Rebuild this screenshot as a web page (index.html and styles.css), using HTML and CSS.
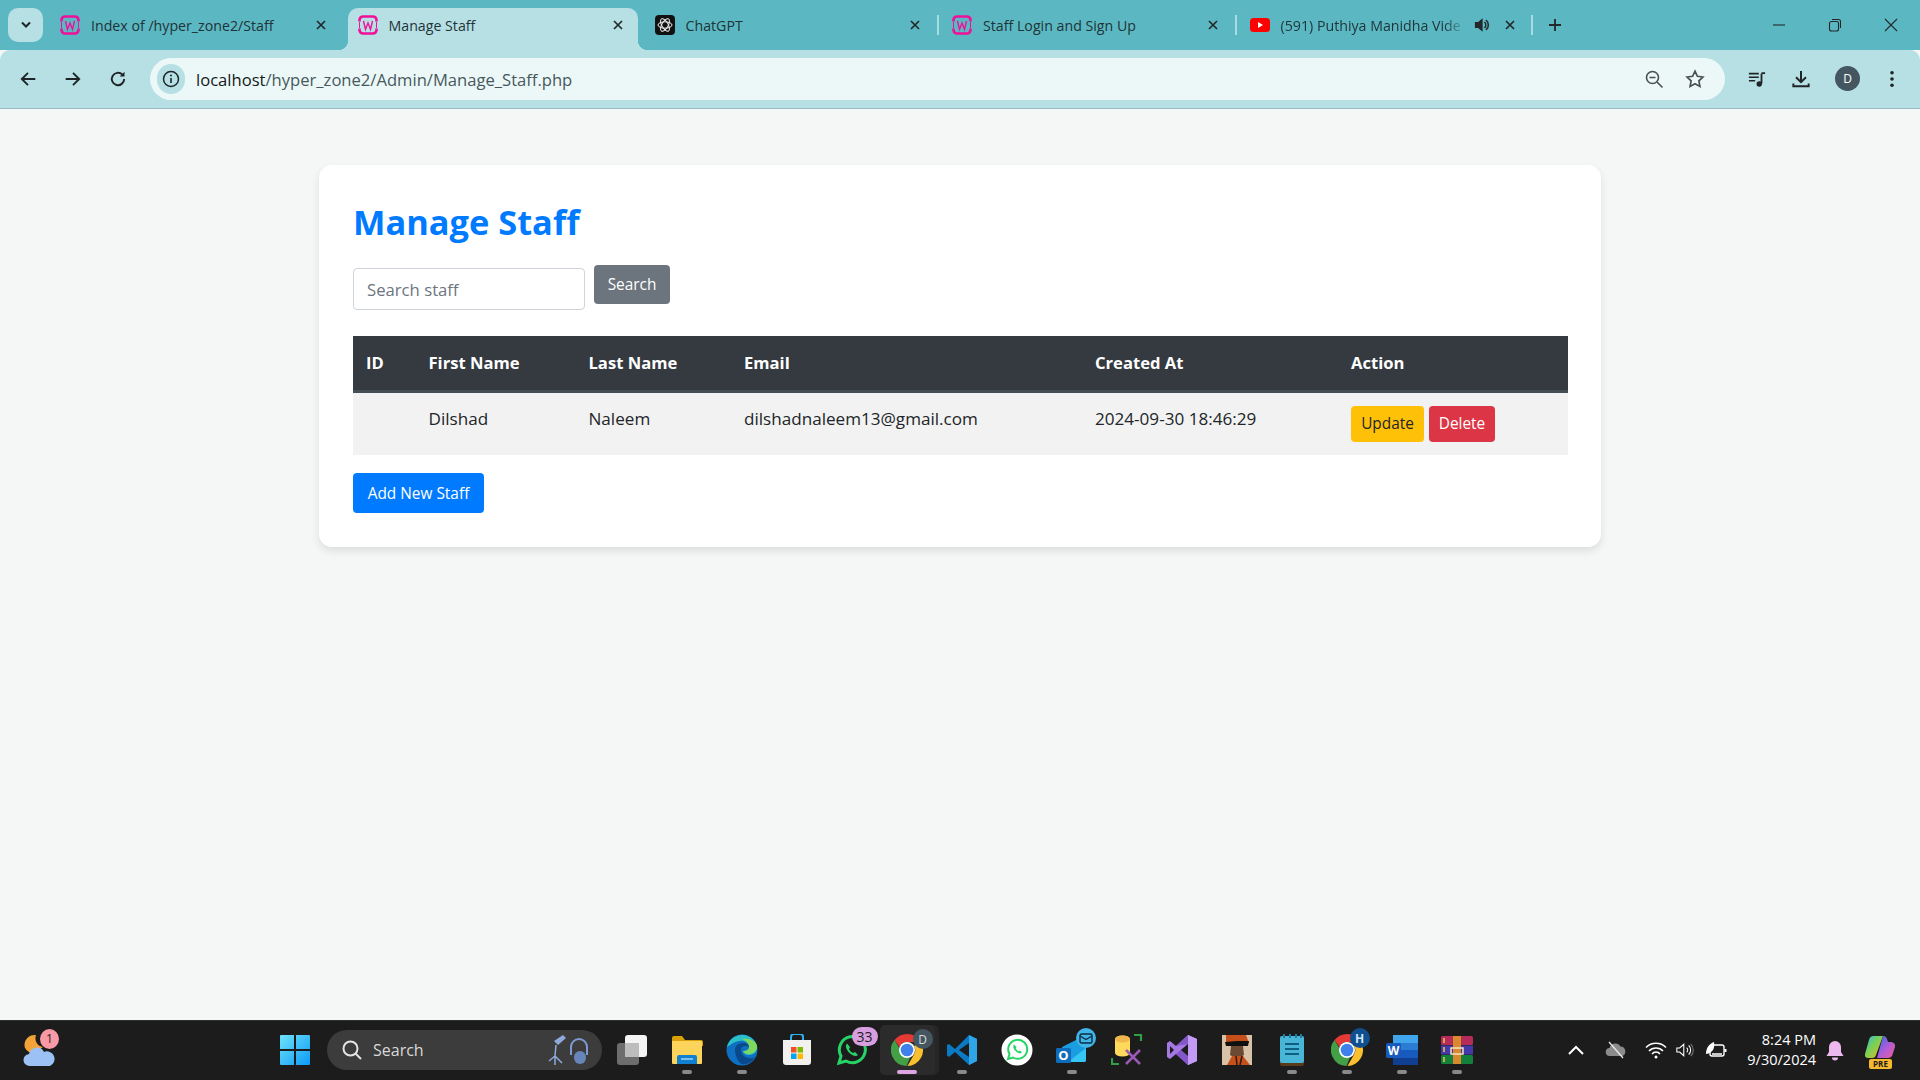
FILE: index.html
```html
<!DOCTYPE html>
<html lang="en">
<head>
	<title>Manage Staff</title>
	<meta charset="utf-8">
	<link rel="stylesheet" href="styles.css">
</head>
<body>
	<svg class="defs" width="0" height="0">
		<symbol id="wamp" viewBox="0 0 20 20">
			<path d="M1.500 6.500V5A3.500 3.500 0 0 1 5 1.500h10A3.500 3.500 0 0 1 18.500 5v1.500M1.500 13.500V15A3.500 3.500 0 0 0 5 18.500h10a3.500 3.500 0 0 0 3.500-3.500v-1.500" fill="none" stroke="#f0109a" stroke-width="2.600"/>
			<path d="M1.500 7v6M18.500 7v6" stroke="#f0109a" stroke-width="1"/>
			<path d="M5.500 6 7.500 14.500 10 8 12.500 14.500 14.500 6" fill="none" stroke="#f0109a" stroke-width="1.400"/>
		</symbol>
		<symbol id="close" viewBox="0 0 12 12">
			<path d="M2 2l8 8M10 2l-8 8" fill="none" stroke="#23282b" stroke-width="1.700"/>
		</symbol>
		<symbol id="chrome" viewBox="0 0 32 32">
			<path d="M16 0A16 16 0 0 1 29.900 8H16a8 8 0 0 0-7.500 5L3.500 6A16 16 0 0 1 16 0z" fill="#e53935"/>
			<path d="M29.900 8A16 16 0 0 1 16.500 32L23 20.500A8 8 0 0 0 23 12z" fill="#fbc02d"/>
			<path d="M3.500 6 10 17a7 7 0 0 0 9 6.500L15.500 32A16 16 0 0 1 3.500 6z" fill="#43a047"/>
			<circle cx="16" cy="16" r="8" fill="#fff"/>
			<circle cx="16" cy="16" r="6.300" fill="#3f80ea"/>
		</symbol>
		<symbol id="whatsapp" viewBox="0 0 32 32">
			<path d="M3 29l2-7A13 13 0 1 1 10 27z" fill="none" stroke="#25d366" stroke-width="3"/>
			<path d="M11 9.500c-2 2-1 6 2 9s7 4.500 9 2.500l-3-3-2 1c-2-1-3-2-4-4l1-2z" fill="#25d366"/>
		</symbol>
	</svg>

	<div class="tabstrip">
		<button class="tab-list">
			<svg width="12" height="8" viewBox="0 0 12 8"><path d="M2 1.500 6 5.500 10 1.500" fill="none" stroke="#1f2426" stroke-width="2"/></svg>
		</button>
		<div class="tab">
			<svg class="favicon"><use href="#wamp"/></svg>
			<span class="tab-title">Index of /hyper_zone2/Staff</span>
			<svg class="tab-close"><use href="#close"/></svg>
		</div>
		<div class="tab tab-active">
			<svg class="favicon"><use href="#wamp"/></svg>
			<span class="tab-title">Manage Staff</span>
			<svg class="tab-close"><use href="#close"/></svg>
		</div>
		<div class="tab">
			<svg class="favicon" viewBox="0 0 20 20">
				<rect width="20" height="20" rx="4" fill="#111"/>
				<g fill="none" stroke="#eee" stroke-width="1">
					<ellipse cx="10" cy="10" rx="7" ry="3.200" transform="rotate(60 10 10)"/>
					<ellipse cx="10" cy="10" rx="7" ry="3.200" transform="rotate(-60 10 10)"/>
					<ellipse cx="10" cy="10" rx="7" ry="3.200"/>
				</g>
			</svg>
			<span class="tab-title">ChatGPT</span>
			<svg class="tab-close"><use href="#close"/></svg>
		</div>
		<div class="tab tab-sep">
			<svg class="favicon"><use href="#wamp"/></svg>
			<span class="tab-title">Staff Login and Sign Up</span>
			<svg class="tab-close"><use href="#close"/></svg>
		</div>
		<div class="tab tab-sep tab-last">
			<svg class="favicon" viewBox="0 0 20 20">
				<rect y="3" width="20" height="14" rx="3.500" fill="#f00"/>
				<path d="M8 7l5 3-5 3z" fill="#fff"/>
			</svg>
			<span class="tab-title tab-fade">(591) Puthiya Manidha Vide</span>
			<svg class="tab-audio" viewBox="0 0 16 16">
				<path d="M1.500 5.500h3L8 2.500v11l-3.500-3h-3z" fill="#23282b" stroke="#23282b" stroke-width="1.200"/>
				<path d="M10.500 5a4 4 0 0 1 0 6M12 3a6.500 6.500 0 0 1 0 10" fill="none" stroke="#23282b" stroke-width="1.500"/>
			</svg>
			<svg class="tab-close"><use href="#close"/></svg>
		</div>
		<svg class="new-tab" viewBox="0 0 14 14"><path d="M7 1v12M1 7h12" stroke="#23282b" stroke-width="1.800"/></svg>
		<div class="window-controls">
			<svg viewBox="0 0 14 14"><path d="M1 7h12" stroke="#23282b" stroke-width="1.100"/></svg>
			<svg viewBox="0 0 14 14"><rect x="1.500" y="3.500" width="9" height="9.500" rx="2" fill="none" stroke="#23282b" stroke-width="1.100"/><path d="M4 1.500h6.500a2 2 0 0 1 2 2V10" fill="none" stroke="#23282b" stroke-width="1.100"/></svg>
			<svg viewBox="0 0 14 14"><path d="M1 1l12 12M13 1 1 13" stroke="#23282b" stroke-width="1.100"/></svg>
		</div>
	</div>

	<div class="toolbar">
		<svg class="tool-icon" viewBox="0 0 16 16"><path d="M14.500 8h-12M8 2.500 2.500 8 8 13.500" fill="none" stroke="#1f2426" stroke-width="1.700"/></svg>
		<svg class="tool-icon" viewBox="0 0 16 16"><path d="M1.500 8h12M8 2.500 13.500 8 8 13.500" fill="none" stroke="#1f2426" stroke-width="1.700"/></svg>
		<svg class="tool-icon" viewBox="0 0 16 16"><path d="M13.500 8A5.500 5.500 0 1 1 11.800 4" fill="none" stroke="#1f2426" stroke-width="1.700"/><path d="M13.800 1.500v4.300H9.500z" fill="#1f2426"/></svg>
		<div class="omnibox">
			<span class="site-info">
				<svg width="18" height="18" viewBox="0 0 18 18"><circle cx="9" cy="9" r="7.500" fill="none" stroke="#1f2426" stroke-width="1.500"/><path d="M9 8v5" stroke="#1f2426" stroke-width="1.600"/><circle cx="9" cy="5.500" r="1" fill="#1f2426"/></svg>
			</span>
			<span class="url"><span class="url-host">localhost</span>/hyper_zone2/Admin/Manage_Staff.php</span>
			<svg class="omni-icon" viewBox="0 0 20 20"><circle cx="8.500" cy="8.500" r="6" fill="none" stroke="#4a5052" stroke-width="1.600"/><path d="M5.500 8.500h6M13 13l5.500 5.500" stroke="#4a5052" stroke-width="1.600"/></svg>
			<svg class="omni-icon" viewBox="0 0 20 20"><path d="M10 2.200l2.400 5.100 5.500.7-4 3.900 1 5.500-4.900-2.700-4.900 2.700 1-5.500-4-3.900 5.500-.7z" fill="none" stroke="#4a5052" stroke-width="1.700"/></svg>
		</div>
		<svg class="tool-icon tool-media" viewBox="0 0 20 20"><path d="M1 4h11M1 8h11M1 12h7" stroke="#1f2426" stroke-width="1.800"/><path d="M15 4v11" stroke="#1f2426" stroke-width="2"/><path d="M15 3.500h4" stroke="#1f2426" stroke-width="2"/><circle cx="12.500" cy="15.500" r="3" fill="#1f2426"/></svg>
		<svg class="tool-icon tool-download" viewBox="0 0 20 20"><path d="M10 1v12M4.500 8 10 13.500 15.500 8" fill="none" stroke="#1f2426" stroke-width="2.200"/><path d="M1.500 15v3h17v-3" fill="none" stroke="#1f2426" stroke-width="2.200"/></svg>
		<span class="avatar">D</span>
		<svg class="tool-icon tool-menu" viewBox="0 0 16 16"><circle cx="8" cy="2.500" r="1.600" fill="#1f2426"/><circle cx="8" cy="8" r="1.600" fill="#1f2426"/><circle cx="8" cy="13.500" r="1.600" fill="#1f2426"/></svg>
	</div>

	<main class="page">
		<section class="card">
			<h1>Manage Staff</h1>
			<form class="search-form">
				<input type="text" class="search-input" placeholder="Search staff">
				<button type="button" class="btn btn-secondary">Search</button>
			</form>
			<table class="staff-table">
				<thead>
					<tr>
						<th class="col-id">ID</th>
						<th class="col-first">First Name</th>
						<th class="col-last">Last Name</th>
						<th class="col-email">Email</th>
						<th class="col-created">Created At</th>
						<th class="col-action">Action</th>
					</tr>
				</thead>
				<tbody>
					<tr>
						<td></td>
						<td>Dilshad</td>
						<td>Naleem</td>
						<td>dilshadnaleem13@gmail.com</td>
						<td>2024-09-30 18:46:29</td>
						<td class="actions">
							<a class="btn btn-warning">Update</a>
							<a class="btn btn-danger">Delete</a>
						</td>
					</tr>
				</tbody>
			</table>
			<a class="btn btn-primary">Add New Staff</a>
		</section>
	</main>

	<footer class="taskbar">
		<div class="task-weather">
			<svg width="36" height="36" viewBox="0 0 36 36">
				<path d="M14 3a10 10 0 0 0-11 13 10 10 0 0 0 9 5l9-6a9 9 0 0 1-7-12z" fill="#f2a43a"/>
				<path d="M8 34a6 6 0 0 1-1-12 8 8 0 0 1 15-2 7 7 0 0 1 6 14z" fill="#9cc1f5"/>
			</svg>
			<span class="weather-badge">1</span>
		</div>
		<div class="task-item">
			<svg width="30" height="30" viewBox="0 0 30 30">
				<defs><linearGradient id="win" x1="0" y1="0" x2="1" y2="1"><stop offset="0" stop-color="#6fe3fb"/><stop offset="1" stop-color="#0b9af5"/></linearGradient></defs>
				<path d="M0 1a1 1 0 0 1 1-1h13v14H0zM16 0h13a1 1 0 0 1 1 1v13H16zM0 16h14v14H1a1 1 0 0 1-1-1zM16 16h14v13a1 1 0 0 1-1 1H16z" fill="url(#win)"/>
			</svg>
		</div>
		<div class="task-search">
			<svg width="22" height="22" viewBox="0 0 22 22"><circle cx="9.500" cy="9.500" r="7" fill="none" stroke="#e4e4e4" stroke-width="2"/><path d="M14.500 14.500 20 20" stroke="#e4e4e4" stroke-width="2"/></svg>
			<span class="task-search-text">Search</span>
			<svg class="search-art" width="46" height="34" viewBox="0 0 46 34">
				<path d="M10 8l9-6 3 3-8 7z" fill="#8fa9dc"/>
				<path d="M12 12l-1 11M11 23l-6 5M11 23l7 7M11 23v9" stroke="#8fa9dc" stroke-width="1.500" fill="none"/>
				<path d="M27 22v-8a8 8 0 0 1 16 0v8" fill="none" stroke="#7d9ad2" stroke-width="2"/>
				<rect x="30" y="18" width="12" height="13" rx="6" fill="#6685b8"/>
			</svg>
		</div>
		<div class="task-item">
			<svg width="32" height="32" viewBox="0 0 32 32">
				<rect x="1" y="9" width="22" height="22" rx="3" fill="#6d6d6d"/>
				<rect x="9" y="1" width="22" height="22" rx="3" fill="#f4f4f4"/>
				<rect x="9" y="9" width="14" height="14" fill="#bdbdbd"/>
			</svg>
		</div>
		<div class="task-item task-open">
			<svg width="32" height="30" viewBox="0 0 32 30">
				<path d="M1 3a2 2 0 0 1 2-2h8l3 4h16a2 2 0 0 1 2 2v4H1z" fill="#d9a008"/>
				<path d="M1 6h30v22a1 1 0 0 1-1 1H2a1 1 0 0 1-1-1z" fill="#fcd35b"/>
				<path d="M6 22a2 2 0 0 1 2-2h16a2 2 0 0 1 2 2v7H6z" fill="#1280d0"/>
				<path d="M10 24h12" stroke="#9fd6f7" stroke-width="1.500"/>
			</svg>
		</div>
		<div class="task-item task-open">
			<svg width="32" height="32" viewBox="0 0 32 32">
				<circle cx="16" cy="16" r="15.500" fill="#0f6fc0"/>
				<path d="M1 13A15.500 15.500 0 0 1 31 12c1 5-3 9-8 9-4 0-6-2-6-4 3 0 6-1 6-4 0-5-5-7-10-6-6 1-10 5-12 6z" fill="#2cc1c9"/>
				<path d="M31 12c.6 4-3 8-8 8-3 0-5-1-6-3 3 0 6-1 6-4 0-4-4-7-7-8 8-1 14 2 15 7z" fill="#7fd75b"/>
				<path d="M9 16c0-4 3-7 8-7 4 0 6 2 6 4-3-2-9-1-8 4 1 6 8 9 14 6-3 5-8 8-13 7-4-1-7-9-7-14z" fill="#0a4a8c"/>
			</svg>
		</div>
		<div class="task-item">
			<svg width="30" height="32" viewBox="0 0 30 32">
				<path d="M9 6V3a3 3 0 0 1 3-3h6a3 3 0 0 1 3 3v3" fill="none" stroke="#2eb0ea" stroke-width="2"/>
				<path d="M1 6h28v22a3 3 0 0 1-3 3H4a3 3 0 0 1-3-3z" fill="#f3f1ee"/>
				<rect x="9" y="13" width="5.500" height="5.500" fill="#f25022"/>
				<rect x="15.500" y="13" width="5.500" height="5.500" fill="#7fba00"/>
				<rect x="9" y="19.500" width="5.500" height="5.500" fill="#00a4ef"/>
				<rect x="15.500" y="19.500" width="5.500" height="5.500" fill="#ffb900"/>
			</svg>
		</div>
		<div class="task-item">
			<svg width="32" height="32"><use href="#whatsapp"/></svg>
			<span class="badge badge-count">33</span>
		</div>
		<div class="task-item task-active">
			<svg width="32" height="32"><use href="#chrome"/></svg>
			<span class="badge badge-profile">D</span>
		</div>
		<div class="task-item task-open">
			<svg width="32" height="32" viewBox="0 0 32 32">
				<path d="M23 1l8 4v22l-8 4-14-13-6 5-2-1.500V11L3 10l6 5z" fill="#0a7ac4"/>
				<path d="M23 1l8 4v22l-8 4z" fill="#2fa4e7"/>
				<path d="M23 9 13 16l10 7z" fill="#1c1c1c"/>
			</svg>
		</div>
		<div class="task-item">
			<svg width="32" height="32" viewBox="0 0 32 32">
				<circle cx="16" cy="16" r="15.500" fill="#fff"/>
				<path d="M7 25l1.500-5a9.500 9.500 0 1 1 3.500 3.500z" fill="none" stroke="#25d366" stroke-width="2"/>
				<path d="M13 10.500c-1.500 1.500-.5 4.500 1.500 6.500s5 3 6.500 1.500l-2-2-1.500.7c-1.500-.7-2-1.500-2.800-2.900l.7-1.300z" fill="#25d366"/>
			</svg>
		</div>
		<div class="task-item task-open">
			<svg width="32" height="32" viewBox="0 0 32 32">
				<path d="M6 13 20 6h10v20a2 2 0 0 1-2 2H10a3 3 0 0 1-3-3z" fill="#1b9de2"/>
				<path d="M30 14v12a2 2 0 0 1-2 2H12z" fill="#35c6f4"/>
				<rect y="14" width="15" height="15" rx="1.500" fill="#0f6cbd"/>
				<text class="icon-letter" x="7.500" y="26" text-anchor="middle" font-size="13">O</text>
			</svg>
			<span class="badge badge-mail">
				<svg width="14" height="11" viewBox="0 0 14 11"><rect x="1" y="1" width="12" height="9" rx="1.500" fill="none" stroke="#0e2b44" stroke-width="1.400"/><path d="M1 3l6 3.500L13 3" fill="none" stroke="#0e2b44" stroke-width="1.400"/></svg>
			</span>
		</div>
		<div class="task-item">
			<svg width="32" height="32" viewBox="0 0 32 32">
				<path d="M1 24v6h7M23 1h7v6" fill="none" stroke="#2f9e44" stroke-width="2.200"/>
				<path d="M4 5a7.500 3.500 0 0 1 15 0v14a7.500 3.500 0 0 1-15 0z" fill="#ffd95a"/>
				<ellipse cx="11.500" cy="5" rx="7.500" ry="3.500" fill="#f1b64c"/>
				<path d="M15 16l14 14M29 16 15 30" stroke="#9b59b6" stroke-width="2.500"/>
			</svg>
		</div>
		<div class="task-item">
			<svg width="32" height="32" viewBox="0 0 32 32">
				<path d="M22 1 31 5v22l-9 4-12-11-6 5-3-2V9l3-2 6 5z" fill="#a678e4"/>
				<path d="M22 1 31 5v22l-9 4z" fill="#c39bf4"/>
				<path d="M22 1v30L10 20 22 10 10 12z" fill="#8457c9"/>
				<path d="M4 12v8l4-4z" fill="#1c1c1c"/>
				<path d="M22 10v12l-7-6z" fill="#1c1c1c"/>
			</svg>
		</div>
		<div class="task-item">
			<svg width="30" height="30" viewBox="0 0 30 30">
				<rect width="30" height="30" fill="#d8c3a8"/>
				<path d="M4 0h20l3 8H4z" fill="#c7501a"/>
				<path d="M3 7l12-1 12 0-1 5H4z" fill="#111"/>
				<path d="M9 11h12l1 9-7 4-7-4z" fill="#6b4a32"/>
				<path d="M5 30l5-9h11l7 9z" fill="#c7501a"/>
				<path d="M14 21l1 9M20 21l-2 9" stroke="#2a1a10" stroke-width="1.500"/>
			</svg>
		</div>
		<div class="task-item task-open">
			<svg width="24" height="32" viewBox="0 0 24 32">
				<rect y="2" width="24" height="30" rx="2" fill="#5b3a1a"/>
				<rect y="2" width="24" height="27" rx="2" fill="#49b6d8"/>
				<path d="M4 0v4M10 0v4M16 0v4M21 0v4" stroke="#1c7ea3" stroke-width="2"/>
				<path d="M5 10h14M5 15h14M5 20h14" stroke="#0f5f80" stroke-width="2"/>
			</svg>
		</div>
		<div class="task-item task-open">
			<svg width="32" height="32"><use href="#chrome"/></svg>
			<span class="badge badge-h">H</span>
		</div>
		<div class="task-item task-open">
			<svg width="32" height="30" viewBox="0 0 32 30">
				<rect x="7" width="25" height="30" rx="1.500" fill="#2b7cd3"/>
				<rect x="7" width="25" height="8" fill="#41a5ee"/>
				<rect x="7" y="15" width="25" height="8" fill="#185abd"/>
				<rect x="7" y="23" width="25" height="7" fill="#103f91"/>
				<rect y="8" width="15" height="15" rx="1.500" fill="#185abd"/>
				<text class="icon-letter" x="7.500" y="20" text-anchor="middle" font-size="12">W</text>
			</svg>
		</div>
		<div class="task-item task-open">
			<svg width="32" height="28" viewBox="0 0 32 28">
				<rect width="32" height="9" rx="1.500" fill="#b52b5a"/>
				<rect y="9.500" width="32" height="9" fill="#4339a8"/>
				<rect y="19" width="32" height="9" rx="1.500" fill="#13813a"/>
				<rect x="12" width="8" height="28" fill="#d98a2e"/>
				<rect x="10" y="12" width="12" height="6" fill="none" stroke="#f5e2c2" stroke-width="1.500"/>
				<path d="M3 2v5M3 11v5M3 21v5" stroke="#f2c14e" stroke-width="1.500"/>
			</svg>
		</div>
		<div class="tray">
			<div class="tray-icon tray-wide">
				<svg width="16" height="10" viewBox="0 0 16 10"><path d="M1 9l7-7 7 7" fill="none" stroke="#fff" stroke-width="2"/></svg>
			</div>
			<div class="tray-icon tray-wide">
				<svg width="22" height="18" viewBox="0 0 22 18"><path d="M5 15a4 4 0 0 1-.5-8 6 6 0 0 1 11-1.500A5 5 0 0 1 17.500 15z" fill="#8b8b8b"/><path d="M4 1l14 16" stroke="#e8e8e8" stroke-width="1.300"/></svg>
			</div>
			<div class="tray-icon tray-wide">
				<svg width="22" height="18" viewBox="0 0 22 18"><path d="M1 6.500a14 14 0 0 1 20 0M4 10a9.500 9.500 0 0 1 14 0M7 13a5 5 0 0 1 8 0" fill="none" stroke="#fff" stroke-width="1.500"/><circle cx="11" cy="16" r="1.500" fill="#fff"/></svg>
			</div>
			<div class="tray-icon tray-narrow">
				<svg width="22" height="18" viewBox="0 0 22 18"><path d="M1 6.500h3.500L9.500 2v14l-5-4.500H1z" fill="none" stroke="#fff" stroke-width="1.300"/><path d="M13 6a4 4 0 0 1 0 6M15.500 3.500a7.500 7.500 0 0 1 0 11" fill="none" stroke="#fff" stroke-width="1.300"/><path d="M18 1.500a10.500 10.500 0 0 1 0 15" fill="none" stroke="#777" stroke-width="1.300"/></svg>
			</div>
			<div class="tray-icon tray-battery">
				<svg width="22" height="18" viewBox="0 0 22 18"><rect x="5" y="4" width="14" height="11" rx="2" fill="none" stroke="#fff" stroke-width="1.400"/><path d="M19.500 8h2v3h-2z" fill="#fff"/><path d="M1 13C1 7 4 3 9 1c1 6-1 11-8 12z" fill="#fff"/><path d="M7 13h10" stroke="#fff" stroke-width="1.500"/></svg>
			</div>
			<div class="clock">
				<span>8:24 PM</span>
				<span>9/30/2024</span>
			</div>
			<div class="tray-icon tray-bell">
				<svg width="18" height="21" viewBox="0 0 18 21"><path d="M9 1a6 6 0 0 1 6 6v5l2.500 4h-17L3 12V7a6 6 0 0 1 6-6z" fill="#ecb8ee"/><path d="M6 17.500a3 3 0 0 0 6 0z" fill="#ecb8ee"/></svg>
			</div>
			<div class="tray-icon tray-copilot">
				<svg width="30" height="30" viewBox="0 0 30 30">
					<defs><linearGradient id="cop" x1="0" y1="0" x2="1" y2="1"><stop offset="0" stop-color="#35b8e8"/><stop offset=".45" stop-color="#7ad151"/><stop offset="1" stop-color="#f0b429"/></linearGradient><linearGradient id="cop2" x1="0" y1="0" x2="1" y2="1"><stop offset="0" stop-color="#2a6fe0"/><stop offset=".55" stop-color="#b45bd6"/><stop offset="1" stop-color="#ee5f93"/></linearGradient></defs>
					<path d="M8 1h10L11 20a4 4 0 0 1-4 3H3a3 3 0 0 1-3-4L4 5a5 5 0 0 1 4-4z" fill="url(#cop)"/>
					<path d="M18 1a4 4 0 0 1 4 3l1 3h3a4 4 0 0 1 4 5l-3 9a5 5 0 0 1-5 2H12z" fill="url(#cop2)"/>
				</svg>
				<span class="pre-badge">PRE</span>
			</div>
		</div>
	</footer>
</body>
</html>
```

FILE: styles.css
```css
* {
	box-sizing: border-box;
}

html, body {
	margin: 0;
	height: 100%;
	overflow: hidden;
}

body {
	display: flex;
	flex-direction: column;
	font-family: "Open Sans", "Noto Sans", sans-serif;
	background-color: #f4f7f6;
	color: #212529;
}

.defs {
	position: absolute;
}

/* browser tabs */
.tabstrip {
	display: flex;
	align-items: center;
	height: 50px;
	flex: none;
	background-color: #5bb8c2;
}

.tab-list {
	flex: none;
	display: flex;
	align-items: center;
	justify-content: center;
	width: 35px;
	height: 34px;
	margin: 0 5px 0 8px;
	border: none;
	border-radius: 10px;
	background-color: #b6e0e4;
}

.tab {
	position: relative;
	display: flex;
	align-items: center;
	flex: none;
	width: 297.500px;
	height: 50px;
	padding: 0 19px 0 12px;
}

.tab-active {
	width: 290px;
	height: 42px;
	margin: 8px 5px 0 2px;
	padding: 0 14px 8px 10px;
	border-radius: 10px 10px 0 0;
	background-color: #b6e0e4;
}

	.tab-active::before, .tab-active::after {
		content: "";
		position: absolute;
		bottom: 0;
		width: 10px;
		height: 10px;
	}

	.tab-active::before {
		left: -10px;
		background: radial-gradient(circle at 0 0, transparent 10px, #b6e0e4 10.500px);
	}

	.tab-active::after {
		right: -10px;
		background: radial-gradient(circle at 100% 0, transparent 10px, #b6e0e4 10.500px);
	}

.tab-sep::before {
	content: "";
	position: absolute;
	left: -3px;
	top: 15px;
	width: 2px;
	height: 20px;
	background-color: #a9dbe0;
}

.tab-last::after {
	content: "";
	position: absolute;
	right: 2px;
	top: 15px;
	width: 2px;
	height: 20px;
	background-color: #a9dbe0;
}

.favicon {
	flex: none;
	width: 20px;
	height: 20px;
	margin-right: 11px;
}

.tab-title {
	flex: 1;
	min-width: 0;
	white-space: nowrap;
	font-size: 14.200px;
	color: #1f3338;
}

.tab-fade {
	-webkit-mask-image: linear-gradient(to right, #000 88%, transparent);
}

.tab-audio {
	flex: none;
	width: 16px;
	height: 16px;
	margin: 0 14px 0 8px;
}

.tab-close {
	flex: none;
	width: 12px;
	height: 12px;
}

.new-tab {
	width: 14px;
	height: 14px;
	margin-left: 13px;
}

.window-controls {
	display: flex;
	align-items: center;
	gap: 42px;
	margin-left: auto;
	padding-right: 22px;
}

	.window-controls svg {
		width: 14px;
		height: 14px;
	}

/* address bar */
.toolbar {
	display: flex;
	align-items: center;
	flex: none;
	height: 59px;
	padding: 0 20px 1px 19px;
	border-bottom: 1px solid #94bcc2;
	border-radius: 10px 10px 0 0;
	background-color: #b6e0e4;
}

.tool-icon {
	flex: none;
	width: 18px;
	height: 18px;
	margin-right: 27px;
}

.toolbar > .tool-icon:nth-child(3) {
	margin-right: 23px;
}

.omnibox {
	display: flex;
	align-items: center;
	flex: none;
	width: 1575px;
	height: 42px;
	padding: 0 20px 0 7px;
	border-radius: 21px;
	background-color: #ecf8f8;
}

.site-info {
	display: flex;
	align-items: center;
	justify-content: center;
	flex: none;
	width: 28px;
	height: 30px;
	margin-right: 11px;
	border-radius: 15px;
	background-color: #b6e0e4;
}

.url {
	flex: 1;
	padding-top: 1px;
	font-size: 16.600px;
	color: #47585c;
}

.url-host {
	color: #14181a;
}

.omni-icon {
	flex: none;
	width: 20px;
	height: 20px;
	margin-left: 21px;
}

.tool-media {
	margin-left: 23px;
	margin-right: 26px;
}

.tool-download {
	margin-right: 25px;
}

.avatar {
	display: flex;
	align-items: center;
	justify-content: center;
	flex: none;
	width: 25px;
	height: 25px;
	margin-right: 23px;
	border-radius: 50%;
	font-size: 12px;
	color: #fff;
	background-color: #44565f;
}

.tool-menu {
	margin-right: 0;
}

/* page */
.page {
	flex: 1;
	min-height: 0;
	padding-top: 56px;
}

.card {
	width: 1282px;
	margin: 0 auto;
	padding: 34px 33px 34px 34px;
	border-radius: 13px;
	background-color: #fff;
	box-shadow: 0 4px 9px rgba(0,0,0,0.1);
}

h1 {
	margin: 0 0 20px;
	font-size: 34.400px;
	line-height: 46px;
	font-weight: 700;
	color: #007bff;
}

.search-form {
	display: flex;
	align-items: flex-start;
	gap: 9px;
	margin-bottom: 26px;
}

.search-input {
	width: 232px;
	height: 42px;
	margin-top: 3px;
	padding: 0 13px;
	border: 1px solid #ced4da;
	border-radius: 4px;
	font: inherit;
	font-size: 16.700px;
	outline: none;
}

	.search-input::placeholder {
		color: #6c757d;
	}

.btn {
	display: inline-flex;
	align-items: center;
	justify-content: center;
	border: none;
	border-radius: 4px;
	font-family: inherit;
	font-size: 15.400px;
	color: #fff;
}

.btn-secondary {
	width: 76px;
	height: 39px;
	background-color: #6c757d;
}

.btn-primary {
	width: 131px;
	height: 40px;
	margin-top: 18px;
	background-color: #007bff;
}

.btn-warning {
	width: 73px;
	height: 36px;
	color: #212529;
	background-color: #ffc107;
}

.btn-danger {
	width: 66px;
	height: 36px;
	background-color: #dc3545;
}

.staff-table {
	width: 100%;
	border-collapse: collapse;
	table-layout: fixed;
	font-size: 17.100px;
	line-height: 26.400px;
}

	.staff-table th {
		padding: 14px 13px 13.600px;
		border-bottom: 3px solid #454d55;
		text-align: left;
		font-size: 16.600px;
		font-weight: 700;
		color: #fff;
		background-color: #343a40;
	}

	.staff-table td {
		padding: 13px;
		vertical-align: top;
		background-color: #f2f2f2;
	}

.col-id { width: 62.500px; }
.col-first { width: 160px; }
.col-last { width: 155.500px; }
.col-email { width: 351px; }
.col-created { width: 256px; }

.actions {
	display: flex;
	gap: 5px;
}

/* windows taskbar */
.taskbar {
	display: flex;
	align-items: center;
	flex: none;
	height: 60px;
	padding-bottom: 1px;
	border-top: 1px solid #2e2e2e;
	background-color: #1c1c1c;
}

.task-weather {
	position: relative;
	flex: none;
	display: flex;
	align-items: center;
	width: 267px;
	padding-left: 22px;
}

.weather-badge {
	position: absolute;
	left: 40px;
	top: -3px;
	width: 19px;
	height: 20px;
	border-radius: 50%;
	text-align: center;
	font-size: 12px;
	line-height: 20px;
	color: #1c1c1c;
	background-color: #f79aa6;
}

.task-item {
	position: relative;
	flex: none;
	display: flex;
	align-items: center;
	justify-content: center;
	width: 55px;
	height: 50px;
}

.task-open::after {
	content: "";
	position: absolute;
	left: 50%;
	bottom: 1px;
	width: 10px;
	height: 4px;
	margin-left: -5px;
	border-radius: 2px;
	background-color: #8a8a8a;
}

.task-active {
	border-radius: 5px;
	background-color: #2b2b2b;
	box-shadow: 4px 0 0 #262626;
}

	.task-active::after {
		content: "";
		position: absolute;
		left: 50%;
		bottom: 1px;
		width: 20px;
		height: 4px;
		margin-left: -10px;
		border-radius: 2px;
		background-color: #dda5e2;
	}

.task-search {
	flex: none;
	display: flex;
	align-items: center;
	width: 275px;
	height: 40px;
	margin: 0 2.500px 0 5px;
	padding: 0 12px 0 14px;
	border-radius: 20px;
	background-color: #3c3c3c;
}

.task-search-text {
	flex: 1;
	margin-left: 10px;
	font-size: 16px;
	color: #d8d8d8;
}

.badge {
	position: absolute;
	display: flex;
	align-items: center;
	justify-content: center;
	border-radius: 50%;
}

.badge-count {
	top: 2px;
	left: 27px;
	width: 26px;
	height: 19px;
	border-radius: 10px;
	font-size: 14px;
	color: #1c1c1c;
	background-color: #d79ee0;
}

.badge-profile {
	top: 4px;
	left: 33px;
	width: 20px;
	height: 20px;
	font-size: 12px;
	color: #d5dde2;
	background-color: #44565f;
}

.badge-mail {
	top: 3px;
	left: 31px;
	width: 20px;
	height: 20px;
	background-color: #3fb5e8;
}

.badge-h {
	top: 3px;
	left: 30px;
	width: 20px;
	height: 20px;
	font-size: 12px;
	font-weight: 700;
	color: #cfe6f7;
	background-color: #0f4f8f;
}

.icon-letter {
	font-family: "Open Sans", sans-serif;
	font-weight: 700;
	fill: #fff;
}

.tray {
	display: flex;
	align-items: center;
	margin-left: auto;
	padding-right: 14px;
}

.tray-icon {
	position: relative;
	display: flex;
	align-items: center;
	justify-content: center;
}

.tray-wide { width: 40px; }
.tray-narrow { width: 18px; }
.tray-battery { width: 44px; }
.tray-bell { width: 38px; }
.tray-copilot { width: 52px; }

.clock {
	display: flex;
	flex-direction: column;
	align-items: flex-end;
	width: 78px;
	font-size: 14.500px;
	line-height: 20px;
	color: #fff;
}

.pre-badge {
	position: absolute;
	left: 15px;
	bottom: -4px;
	width: 23px;
	height: 10px;
	border-radius: 2px;
	text-align: center;
	font-size: 8px;
	font-weight: 700;
	line-height: 10px;
	color: #1c1c1c;
	background-color: #f5b82e;
}
```
